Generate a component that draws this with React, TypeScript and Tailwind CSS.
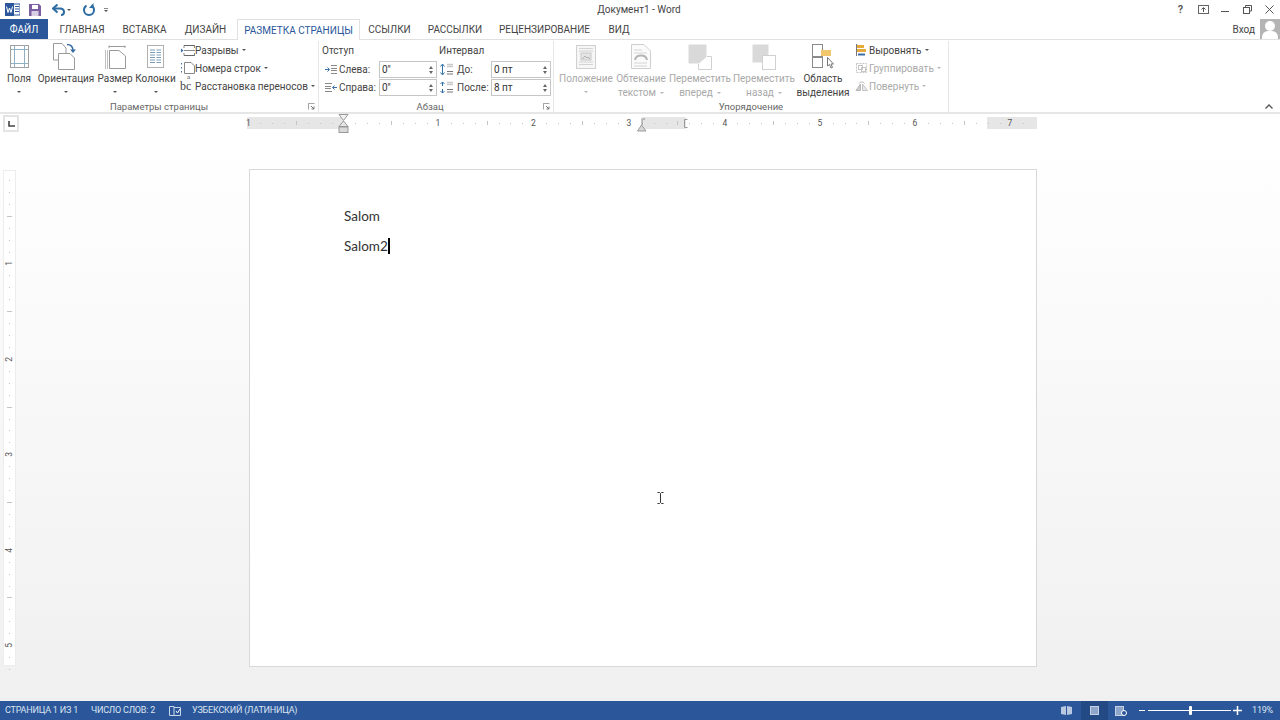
import type { ReactNode } from "react";

const tabs = [
  { label: "ГЛАВНАЯ", className: "ml-[12px] w-[44px]" },
  { label: "ВСТАВКА", className: "ml-[19px] w-[43px]" },
  { label: "ДИЗАЙН", className: "ml-[19px] w-[41px]" },
];

const tabsAfter = [
  { label: "ССЫЛКИ", className: "ml-[9px] w-[41px]" },
  { label: "РАССЫЛКИ", className: "ml-[19px] w-[52px]" },
  { label: "РЕЦЕНЗИРОВАНИЕ", className: "ml-[19px] w-[89px]" },
  { label: "ВИД", className: "ml-[20px] w-[20px]" },
];

const rulerTicks = Array.from({ length: 66 }, (_, i) => i);

function Caret({ muted }: { muted?: boolean }) {
  return (
    <span
      className={`inline-block h-0 w-0 border-x-[2px] border-t-[2px] border-x-transparent ${
        muted ? "border-t-[#b5b5b5]" : "border-t-[#555]"
      }`}
    />
  );
}

function LargeButton({
  width,
  icon,
  lines,
  muted,
  caretInline,
  noCaret,
}: {
  width: string;
  icon: ReactNode;
  lines: string[];
  muted?: boolean;
  caretInline?: boolean;
  noCaret?: boolean;
}) {
  return (
    <div className={`flex shrink-0 flex-col items-center ${width} ${muted ? "text-[#a9a9a9]" : "text-[#444]"}`}>
      <div className="flex h-[31px] items-center justify-center">{icon}</div>
      <div className="h-[14px] whitespace-nowrap leading-[14px]">{lines[0]}</div>
      {lines[1] ? (
        <div className="flex h-[13px] items-center gap-[4px] whitespace-nowrap leading-[13px]">
          {lines[1]}
          {caretInline && <Caret muted={muted} />}
        </div>
      ) : (
        !noCaret && (
          <div className="flex h-[11px] items-center">
            <Caret muted={muted} />
          </div>
        )
      )}
    </div>
  );
}

function SmallButton({
  icon,
  label,
  muted,
}: {
  icon: ReactNode;
  label: string;
  muted?: boolean;
}) {
  return (
    <div className={`flex h-[18px] items-center whitespace-nowrap ${muted ? "text-[#a9a9a9]" : "text-[#444]"}`}>
      <span className="flex w-[15px] justify-center">{icon}</span>
      <span>{label}</span>
      <span className="ml-[3px] flex items-center">
        <Caret muted={muted} />
      </span>
    </div>
  );
}

function Spinner({ value, width }: { value: string; width: string }) {
  return (
    <div className={`flex h-[17px] items-center justify-between border border-[#c6c6c6] pl-[2px] pr-[3px] ${width}`}>
      <span className="leading-none text-[#333]">{value}</span>
      <span className="flex flex-col gap-[2px]">
        <span className="h-0 w-0 border-x-[2.5px] border-b-[3px] border-x-transparent border-b-[#666]" />
        <span className="h-0 w-0 border-x-[2.5px] border-t-[3px] border-x-transparent border-t-[#666]" />
      </span>
    </div>
  );
}

function Launcher() {
  return (
    <svg width="7" height="7" viewBox="0 0 7 7" className="shrink-0">
      <path d="M.5 3V.5H6.5M.5 .5V6.5" fill="none" stroke="#a5a5a5" />
      <path d="M3 3L6 6M6 3.5V6H3.5" fill="none" stroke="#777" />
    </svg>
  );
}

function GroupFooter({ label, launcher, offset }: { label: string; launcher?: boolean; offset?: string }) {
  return (
    <div className="relative flex h-[12px] items-center justify-center pt-[2px] text-[9.5px] text-[#666]">
      <span className={offset}>{label}</span>
      {launcher && (
        <span className="absolute right-[3px] top-[3px] flex">
          <Launcher />
        </span>
      )}
    </div>
  );
}

function MarginsIcon() {
  return (
    <svg width="19" height="23" viewBox="0 0 19 23">
      <rect x=".5" y=".5" width="18" height="22" fill="#fff" stroke="#a0a0a0" />
      <path d="M4.5 1V22M14.5 1V22M1 4.5H18M1 18.5H18" stroke="#8fb0c2" />
    </svg>
  );
}

function OrientationIcon() {
  return (
    <svg width="26" height="27" viewBox="0 0 26 27">
      <path d="M.5 .5H9L13 5V17H.5Z" fill="#fff" stroke="#9a9a9a" />
      <path d="M5.5 10.5H17L21.5 15V26.5H5.5Z" fill="#fff" stroke="#9a9a9a" />
      <path d="M14 1.5C18 1.5 20 3.5 20 8" fill="none" stroke="#3b6ea5" strokeWidth="1.5" />
      <path d="M17 6.5L20 10L23 6.5Z" fill="#3b6ea5" />
    </svg>
  );
}

function SizeIcon() {
  return (
    <svg width="21" height="24" viewBox="0 0 21 24">
      <path d="M4 1.5H20M4 .5V3M20 .5V3" stroke="#9a9a9a" />
      <path d="M.5 5V24M2.5 5V24" stroke="#c0c0c0" />
      <path d="M4.5 5.5H14L20.5 11V23.5H4.5Z" fill="#fff" stroke="#9a9a9a" />
    </svg>
  );
}

function ColumnsIcon() {
  return (
    <svg width="17" height="23" viewBox="0 0 17 23">
      <rect x=".5" y=".5" width="16" height="22" fill="#fff" stroke="#b0b0b0" />
      <path
        d="M3 5H8M9.5 5H14M3 7.5H8M9.5 7.5H14M3 10H8M9.5 10H14M3 12.5H8M9.5 12.5H14M3 15H8M9.5 15H14M3 17.5H8M9.5 17.5H14"
        stroke="#7b9db8"
      />
    </svg>
  );
}

function BreaksIcon() {
  return (
    <svg width="14" height="11" viewBox="0 0 14 11">
      <path d="M3 .5H14M3 10.5H14" stroke="#666" />
      <path d="M3 .5V3M13.5 .5V3M3 8V10.5M13.5 8V10.5" stroke="#888" />
      <path d="M3 5.5H14" stroke="#8a8a8a" />
      <path d="M0 3.5L2.5 5.5L0 7.5Z" fill="#3b6ea5" />
    </svg>
  );
}

function LineNumbersIcon() {
  return (
    <svg width="14" height="12" viewBox="0 0 14 12">
      <path d="M.5 1V2.5M.5 5V6.5M.5 9V10.5" stroke="#3b6ea5" />
      <path d="M3.5 .5H10L13.5 4V11.5H3.5Z" fill="#fff" stroke="#888" />
    </svg>
  );
}

function PositionIcon() {
  return (
    <svg width="20" height="24" viewBox="0 0 20 24">
      <rect x=".5" y=".5" width="19" height="23" fill="#f6f6f6" stroke="#d0d0d0" />
      <path d="M3 3.5H17M3 6H17M3 17H17M3 19.5H17" stroke="#d4d4d4" />
      <rect x="5" y="8" width="10" height="7" fill="#e4e4e4" stroke="#c8c8c8" />
      <path d="M6.5 14L9 11L11 13L12 12L14 14" fill="none" stroke="#b0b0b0" />
    </svg>
  );
}

function WrapIcon() {
  return (
    <svg width="20" height="25" viewBox="0 0 20 25">
      <path d="M.5 .5H13L19.5 7V24.5H.5Z" fill="#fbfbfb" stroke="#cfcfcf" />
      <path d="M3 6H11M3 9H16M3 19H16M3 22H16" stroke="#d4d4d4" />
      <path d="M4 16C5 10 15 10 16 16" fill="none" stroke="#b5b5b5" strokeWidth="2" />
    </svg>
  );
}

function ForwardIcon() {
  return (
    <svg width="24" height="26" viewBox="0 0 24 26">
      <rect x=".5" y=".5" width="18" height="19" fill="#d9d9d9" />
      <path d="M19 12.5H23.5V25.5H10.5V20" fill="#fff" stroke="#d0d0d0" />
    </svg>
  );
}

function BackwardIcon() {
  return (
    <svg width="24" height="26" viewBox="0 0 24 26">
      <rect x=".5" y=".5" width="16" height="18" fill="#d9d9d9" />
      <rect x="10.5" y="11.5" width="13" height="14" fill="#fff" stroke="#d0d0d0" />
    </svg>
  );
}

function SelectionIcon() {
  return (
    <svg width="23" height="25" viewBox="0 0 23 25">
      <rect x=".5" y=".5" width="10" height="12" fill="#fff" stroke="#8a8a8a" />
      <rect x=".5" y="13.5" width="10" height="10" fill="#fff" stroke="#8a8a8a" />
      <rect x="9" y="6" width="10" height="6" fill="#f2c66d" />
      <path d="M15.5 13.5V22L17.5 20.5L19 24L20.5 23.5L19 20H21.5Z" fill="#fff" stroke="#777" />
    </svg>
  );
}

function AlignIcon() {
  return (
    <svg width="11" height="12" viewBox="0 0 11 12">
      <path d="M.5 0V12" stroke="#777" />
      <rect x="1" y="1" width="7" height="3" fill="#e6a93c" />
      <rect x="1" y="5" width="9" height="3" fill="#e6a93c" />
      <path d="M2 10.5H9" stroke="#3b6ea5" strokeWidth="2" />
    </svg>
  );
}

function GroupIcon() {
  return (
    <svg width="13" height="12" viewBox="0 0 13 12">
      <path d="M1.5 1.5H11.5V10.5H1.5Z" fill="none" stroke="#c5c5c5" strokeDasharray="2 1" />
      <rect x="3.5" y="3.5" width="4" height="4" fill="none" stroke="#c5c5c5" />
      <rect x="6.5" y="5.5" width="4" height="4" fill="none" stroke="#c5c5c5" />
    </svg>
  );
}

function RotateIcon() {
  return (
    <svg width="13" height="10" viewBox="0 0 13 10">
      <path d="M1 9.5L5.5 3V9.5Z" fill="#d0d0d0" stroke="#b5b5b5" />
      <path d="M7.5 9.5V3L12.5 9.5Z" fill="#e6e6e6" stroke="#c5c5c5" />
      <path d="M4 2.5C5.5 .5 8 .5 9.5 2.5" fill="none" stroke="#b5b5b5" />
    </svg>
  );
}

function IndentLeftIcon() {
  return (
    <svg width="12" height="9" viewBox="0 0 12 9">
      <path d="M6 .5H12M6 3.5H12M6 5.5H12M6 8.5H12" stroke="#888" />
      <path d="M0 4.5H4M2.5 2.5L4.5 4.5L2.5 6.5" fill="none" stroke="#3b6ea5" />
    </svg>
  );
}

function IndentRightIcon() {
  return (
    <svg width="12" height="9" viewBox="0 0 12 9">
      <path d="M0 .5H7M0 3.5H6M0 5.5H6M0 8.5H7" stroke="#888" />
      <path d="M12 4.5H8M9.5 2.5L7.5 4.5L9.5 6.5" fill="none" stroke="#3b6ea5" />
    </svg>
  );
}

function SpacingIcon({ tight }: { tight?: boolean }) {
  return (
    <svg width="14" height="13" viewBox="0 0 14 13">
      <path
        d={tight ? "M2.5 2V11M.5 3.5L2.5 1L4.5 3.5M.5 9.5L2.5 12L4.5 9.5" : "M2.5 1V5M.5 3L2.5 1L4.5 3M2.5 8V12M.5 10L2.5 12L4.5 10"}
        fill="none"
        stroke="#2f6fa8"
      />
      <path d="M7 1.5H13M7 3.5H13" stroke="#c9c9c9" strokeWidth="1.5" />
      <path d="M7 8.5H13M7 11H13" stroke="#777" />
    </svg>
  );
}

function TitleBar() {
  return (
    <div className="relative flex h-[19px] shrink-0 items-center text-[#444]">
      <div className="ml-[5px] flex w-[16px] items-center">
        <svg width="15" height="13" viewBox="0 0 15 13">
          <rect x="4" y="1" width="11" height="11" fill="#fff" stroke="#2b579a" />
          <path d="M10 3.5H14M10 6H14M10 8.5H14" stroke="#2b579a" />
          <rect x="0" y="0" width="9" height="13" fill="#2b579a" />
          <path d="M1.5 3.5L3 9.5L4.5 5L6 9.5L7.5 3.5" fill="none" stroke="#fff" />
        </svg>
      </div>
      <svg width="12" height="12" viewBox="0 0 12 12" className="ml-[8px]">
        <path d="M0 0H10L12 2V12H0Z" fill="#7b5fa0" />
        <rect x="3" y="1" width="6" height="4" fill="#fff" />
        <rect x="2.5" y="7" width="7" height="5" fill="#d8cfe5" />
      </svg>
      <svg width="13" height="12" viewBox="0 0 13 12" className="ml-[11px]">
        <path d="M2 4.5H8C11 4.5 12 6.5 12 8C12 9.5 11 11 9 11" fill="none" stroke="#2b6ca3" strokeWidth="2" />
        <path d="M5.5 .5L1 4.5L5.5 8.5" fill="none" stroke="#2b6ca3" strokeWidth="2" />
      </svg>
      <span className="ml-[2px] flex">
        <Caret />
      </span>
      <svg width="12" height="13" viewBox="0 0 12 13" className="ml-[12px]">
        <path d="M3.5 2.6C1.7 3.6 1 5.3 1 7C1 9.8 3.2 12 6 12C8.8 12 11 9.8 11 7C11 5.3 10.3 3.6 8.5 2.6" fill="none" stroke="#2b6ca3" strokeWidth="2" />
        <path d="M10.5 0V5H6" fill="#2b6ca3" />
      </svg>
      <div className="ml-[9px] flex flex-col items-center gap-[1px]">
        <span className="h-[1px] w-[4px] bg-[#888]" />
        <Caret />
      </div>
      <div className="flex-1 pr-[5px] text-center text-[10px] leading-none">Документ1 - Word</div>
      <div className="flex items-center text-[#555]">
        <span className="w-[11px] text-center text-[11px] font-semibold leading-none">?</span>
        <svg width="11" height="9" viewBox="0 0 11 9" className="ml-[12px]">
          <rect x=".5" y=".5" width="10" height="8" fill="none" stroke="#666" />
          <path d="M5.5 7V3M3.5 4.5L5.5 2.5L7.5 4.5" fill="none" stroke="#555" />
        </svg>
        <span className="ml-[12px] mt-[3px] h-[1px] w-[8px] bg-[#555]" />
        <svg width="9" height="9" viewBox="0 0 9 9" className="ml-[14px]">
          <path d="M2.5 2V.5H8.5V6H7" fill="none" stroke="#555" />
          <rect x=".5" y="2.5" width="6" height="6" fill="none" stroke="#555" />
        </svg>
        <svg width="9" height="9" viewBox="0 0 9 9" className="ml-[13px] mr-[6px]">
          <path d="M.5 .5L8.5 8.5M8.5 .5L.5 8.5" stroke="#555" />
        </svg>
      </div>
    </div>
  );
}

function TabBar() {
  return (
    <div className="relative flex h-[21px] shrink-0 items-start text-[10px] text-[#444]">
      <div className="absolute bottom-0 left-0 right-0 h-[1px] bg-[#e1e1e1]" />
      <div className="relative flex h-[20px] w-[48px] items-center justify-center bg-[#2b579a] text-white">ФАЙЛ</div>
      {tabs.map((tab) => (
        <div key={tab.label} className={`flex h-[20px] shrink-0 items-center justify-center whitespace-nowrap ${tab.className}`}>
          {tab.label}
        </div>
      ))}
      <div className="relative ml-[11px] flex h-[21px] w-[123px] shrink-0 items-start justify-center border-x border-t border-[#e1e1e1] bg-white pt-[3px] text-[#2b579a]">
        РАЗМЕТКА СТРАНИЦЫ
      </div>
      {tabsAfter.map((tab) => (
        <div key={tab.label} className={`flex h-[20px] shrink-0 items-center justify-center whitespace-nowrap ${tab.className}`}>
          {tab.label}
        </div>
      ))}
      <div className="flex-1" />
      <div className="flex h-[20px] items-center">Вход</div>
      <div className="relative ml-[5px] h-[20px] w-[20px] overflow-hidden bg-[#b4b4b4]">
        <span className="absolute left-[5px] top-[2px] h-[10px] w-[10px] rounded-full bg-white" />
        <span className="absolute left-[2px] top-[12px] h-[12px] w-[16px] rounded-t-[6px] bg-white" />
      </div>
    </div>
  );
}

function Ribbon() {
  return (
    <div className="flex h-[74px] shrink-0 items-stretch border-b-2 border-[#e6e6e6] pt-[1px] text-[10px]">
      <div className="flex w-[319px] shrink-0 flex-col border-r border-[#e6e6e6]">
        <div className="flex h-[59px] shrink-0">
          <LargeButton width="w-[38px]" icon={<MarginsIcon />} lines={["Поля"]} />
          <LargeButton width="w-[56px]" icon={<OrientationIcon />} lines={["Ориентация"]} />
          <LargeButton width="w-[42px]" icon={<SizeIcon />} lines={["Размер"]} />
          <LargeButton width="w-[39px]" icon={<ColumnsIcon />} lines={["Колонки"]} />
          <div className="ml-[5px] flex flex-col">
            <SmallButton icon={<BreaksIcon />} label="Разрывы" />
            <SmallButton icon={<LineNumbersIcon />} label="Номера строк" />
            <div className="flex h-[18px] items-center whitespace-nowrap text-[#444]">
              <span className="relative w-[15px] font-['Liberation_Serif',serif] text-[12px] leading-none">
                bc
                <span className="absolute left-[7px] top-[-6px] text-[7px] leading-[6px]">a</span>
              </span>
              <span>Расстановка переносов</span>
              <span className="ml-[3px] flex items-center">
                <Caret />
              </span>
            </div>
          </div>
        </div>
        <GroupFooter label="Параметры страницы" launcher />
      </div>

      <div className="flex w-[235px] shrink-0 flex-col border-r border-[#e6e6e6] text-[#444]">
        <div className="flex h-[59px] shrink-0 pl-[3px]">
          <div className="flex w-[117px] shrink-0 flex-col">
            <div className="mt-[3px] h-[14px] leading-[14px]">Отступ</div>
            <div className="mt-[3px] flex h-[17px] items-center">
              <span className="ml-[3px] w-[14px]"><IndentLeftIcon /></span>
              <span className="w-[40px]">Слева:</span>
              <Spinner value={'0"'} width="w-[58px]" />
            </div>
            <div className="mt-[1px] flex h-[17px] items-center">
              <span className="ml-[3px] w-[14px]"><IndentRightIcon /></span>
              <span className="w-[40px]">Справа:</span>
              <Spinner value={'0"'} width="w-[58px]" />
            </div>
          </div>
          <div className="flex flex-1 flex-col">
            <div className="mt-[3px] h-[14px] leading-[14px]">Интервал</div>
            <div className="mt-[3px] flex h-[17px] items-center">
              <span className="ml-[1px] w-[17px]"><SpacingIcon tight /></span>
              <span className="w-[34px]">До:</span>
              <Spinner value="0 пт" width="w-[60px]" />
            </div>
            <div className="mt-[1px] flex h-[17px] items-center">
              <span className="ml-[1px] w-[17px]"><SpacingIcon /></span>
              <span className="w-[34px]">После:</span>
              <Spinner value="8 пт" width="w-[60px]" />
            </div>
          </div>
        </div>
        <GroupFooter label="Абзац" launcher offset="relative left-[-6px]" />
      </div>

      <div className="flex w-[395px] shrink-0 flex-col border-r border-[#e6e6e6]">
        <div className="flex h-[59px] shrink-0 pl-[4px]">
          <LargeButton width="w-[56px]" icon={<PositionIcon />} lines={["Положение"]} muted />
          <LargeButton width="w-[54px]" icon={<WrapIcon />} lines={["Обтекание", "текстом"]} muted caretInline />
          <LargeButton width="w-[64px]" icon={<ForwardIcon />} lines={["Переместить", "вперед"]} muted caretInline />
          <LargeButton width="w-[64px]" icon={<BackwardIcon />} lines={["Переместить", "назад"]} muted caretInline />
          <LargeButton width="w-[54px]" icon={<SelectionIcon />} lines={["Область", "выделения"]} />
          <div className="ml-[4px] flex flex-col">
            <SmallButton icon={<AlignIcon />} label="Выровнять" />
            <SmallButton icon={<GroupIcon />} label="Группировать" muted />
            <SmallButton icon={<RotateIcon />} label="Повернуть" muted />
          </div>
        </div>
        <GroupFooter label="Упорядочение" />
      </div>

      <div className="flex flex-1 items-end justify-end pb-[3px] pr-[7px]">
        <svg width="8" height="5" viewBox="0 0 8 5">
          <path d="M.5 4.5L4 1L7.5 4.5" fill="none" stroke="#555" strokeWidth="1.3" />
        </svg>
      </div>
    </div>
  );
}

function HorizontalRuler() {
  const numbers = [
    { n: 1, x: 1.5 },
    { n: 1, x: 191 },
    { n: 2, x: 286.5 },
    { n: 3, x: 382 },
    { n: 4, x: 478 },
    { n: 5, x: 573 },
    { n: 6, x: 668 },
    { n: 7, x: 763 },
  ];

  return (
    <div className="flex h-[21px] shrink-0 items-start">
      <div className="ml-[3px] mt-[1px] flex h-[17px] w-[16px] items-center justify-center border-2 border-[#e4e4e4] bg-white">
        <svg width="7" height="6" viewBox="0 0 7 6">
          <path d="M1 0V5H7" fill="none" stroke="#444" strokeWidth="1.6" />
        </svg>
      </div>
      <div className="relative ml-[228px] mt-[3px] flex h-[12px] w-[790px] text-[8.5px] text-[#555]">
        <div className="w-[96px] bg-[#e6e6e6]" />
        <div className="w-[299px] bg-white" />
        <div className="w-[44px] bg-[#e6e6e6]" />
        <div className="w-[301px] bg-white" />
        <div className="flex-1 bg-[#e6e6e6]" />
        {rulerTicks.map((i) => {
          const step = i % 8;
          if (step === 0) return null;
          return (
            <span
              key={i}
              className={`absolute w-[1px] ${step === 4 ? "top-[4px] h-[4px] bg-[#c4c4c4]" : "top-[6px] h-[1px] bg-[#c4c4c4]"}`}
              style={{ left: 1 + i * 11.93 }}
            />
          );
        })}
        {numbers.map((item) => (
          <span
            key={item.x}
            className="absolute top-0 w-[6px] text-center leading-[12px]"
            style={{ left: item.x - 3 }}
          >
            {item.n}
          </span>
        ))}
        <svg width="11" height="20" viewBox="0 0 11 20" className="absolute left-[91px] top-[-3px]">
          <path d="M1 .5H10L5.5 6.5Z" fill="#f2f2f2" stroke="#999" />
          <path d="M5.5 7L10 12.5H1Z" fill="#e6e6e6" stroke="#999" />
          <rect x="1" y="13" width="9" height="5.5" fill="#d9d9d9" stroke="#999" />
        </svg>
        <svg width="10" height="14" viewBox="0 0 10 14" className="absolute left-[390px] top-[1px]">
          <path d="M.5 13L4.5 7L9 13Z" fill="#d9d9d9" stroke="#999" />
          <path d="M5 .5V7M7 0V2" stroke="#888" />
        </svg>
        <svg width="4" height="9" viewBox="0 0 4 9" className="absolute left-[437px] top-[2px]">
          <path d="M3.5 .5H.5V8.5H3.5" fill="none" stroke="#999" />
        </svg>
      </div>
    </div>
  );
}

function VerticalRuler() {
  return (
    <div className="relative ml-[3px] mt-[1px] h-[496px] w-[13px] shrink-0 border border-[#ededed] bg-white text-[8.5px] text-[#555]">
      {Array.from({ length: 42 }, (_, i) => i).map((i) => {
        const step = i % 8;
        if (step === 7) {
          return (
            <span
              key={i}
              className="absolute left-[-1px] w-[13px] -rotate-90 text-center leading-none"
              style={{ top: (i + 1) * 11.93 - 7 }}
            >
              {(i + 1) / 8}
            </span>
          );
        }
        return (
          <span
            key={i}
            className={`absolute h-[1px] bg-[#c4c4c4] ${step === 3 ? "left-[3px] w-[5px]" : "left-[5px] w-[1px]"}`}
            style={{ top: (i + 1) * 11.93 - 3 }}
          />
        );
      })}
    </div>
  );
}

function Page() {
  return (
    <div className="ml-[233px] h-[498px] w-[788px] shrink-0 border border-[#d8d8d8] bg-white pl-[94px] pt-[36px] font-['Lato',sans-serif] text-[13.5px] leading-[20px] text-[#333]">
      <p>Salom</p>
      <p className="mt-[10px] flex items-center">
        Salom2
        <span className="h-[16px] w-[2px] bg-black" />
      </p>
    </div>
  );
}

function StatusBar() {
  return (
    <div className="flex h-[19px] shrink-0 items-center bg-[#2b579a] text-[9px] tracking-[-0.2px] text-[#dbe4f1]">
      <span className="ml-[5px] w-[86px] whitespace-nowrap">СТРАНИЦА 1 ИЗ 1</span>
      <span className="w-[78px] whitespace-nowrap">ЧИСЛО СЛОВ: 2</span>
      <svg width="12" height="10" viewBox="0 0 12 10">
        <path d="M.5 .5H5V9.5H.5ZM5 1.5H11.5V9.5H5" fill="none" stroke="#c9d6e9" />
        <path d="M7 5L8.5 7L11 3" fill="none" stroke="#fff" />
      </svg>
      <span className="ml-[11px] whitespace-nowrap">УЗБЕКСКИЙ (ЛАТИНИЦА)</span>
      <div className="flex-1" />
      <svg width="11" height="9" viewBox="0 0 11 9">
        <path d="M0 1L5 0V9L0 8ZM6 0L11 1V8L6 9Z" fill="#b7c8e0" />
      </svg>
      <div className="ml-[9px] flex h-[19px] w-[27px] items-center justify-center bg-[#234a85]">
        <span className="h-[9px] w-[9px] border border-[#c5d2e6] bg-[#8ea6ca]" />
      </div>
      <svg width="12" height="10" viewBox="0 0 12 10" className="ml-[7px]">
        <rect x=".5" y=".5" width="8" height="9" fill="#8ea6ca" stroke="#c5d2e6" />
        <circle cx="9" cy="7" r="2.5" fill="#2b579a" stroke="#fff" />
      </svg>
      <span className="ml-[12px] h-[1.5px] w-[6px] bg-white" />
      <div className="relative ml-[3px] h-[1px] w-[83px] bg-white">
        <span className="absolute left-[41px] top-[-4px] h-[9px] w-[3px] rounded-[1px] bg-white" />
      </div>
      <svg width="9" height="9" viewBox="0 0 9 9" className="ml-[2px]">
        <path d="M4.5 0V9M0 4.5H9" stroke="#fff" strokeWidth="1.5" />
      </svg>
      <span className="ml-[10px] mr-[7px] whitespace-nowrap">119%</span>
    </div>
  );
}

export default function App() {
  return (
    <div className="relative flex h-[720px] w-[1280px] flex-col overflow-hidden bg-white font-['Roboto','Noto_Sans',sans-serif]">
      <TitleBar />
      <TabBar />
      <Ribbon />
      <HorizontalRuler />
      <div className="flex flex-1 items-start bg-gradient-to-b from-white to-[#f0f0f0] pt-[34px]">
        <VerticalRuler />
        <Page />
      </div>
      <StatusBar />
      <svg width="7" height="12" viewBox="0 0 7 12" className="absolute left-[657px] top-[492px]">
        <path d="M.5 .5H2.5L3.5 1.5L4.5 .5H6.5M3.5 1.5V10.5M.5 11.5H2.5L3.5 10.5L4.5 11.5H6.5" fill="none" stroke="#333" />
      </svg>
    </div>
  );
}
